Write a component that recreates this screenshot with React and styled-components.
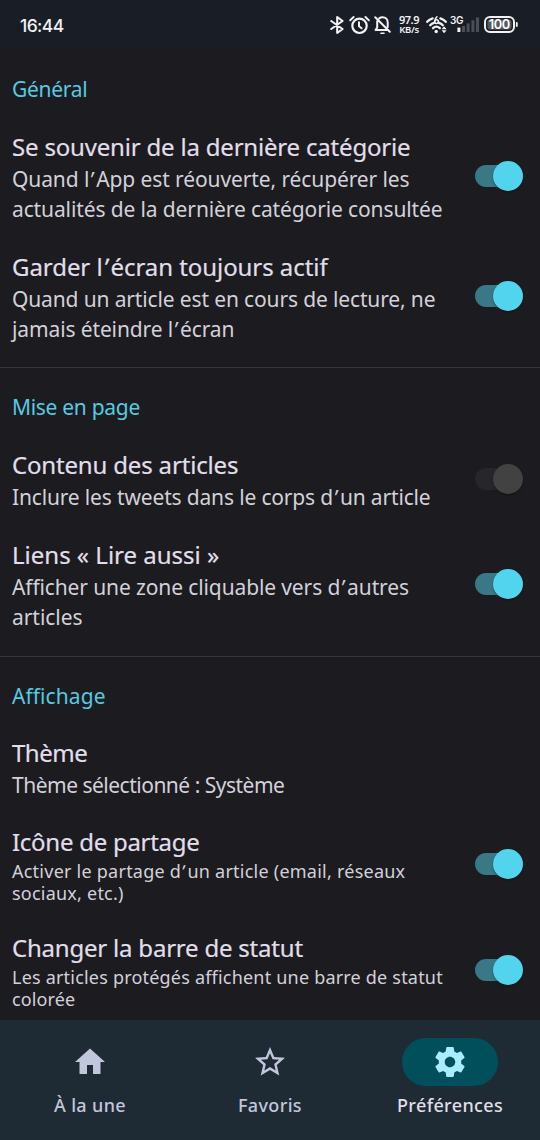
import React from "react";
import styled, { createGlobalStyle } from "styled-components";

const GlobalStyle = createGlobalStyle`
  * { box-sizing: border-box; }
  body { margin: 0; background: #1c1b1f; }
`;

const Screen = styled.div`
  width: 540px;
  height: 1140px;
  display: flex;
  flex-direction: column;
  overflow: hidden;
  background: #1c1b1f;
  color: #e0dfea;
  font-family: "Noto Sans", sans-serif;
`;

const StatusBar = styled.header`
  flex: none;
  height: 50px;
  padding: 0 22px 0 20px;
  display: flex;
  align-items: center;
  justify-content: space-between;
  background: #191d25;
  color: #f2f2f4;
  font-family: Inter, sans-serif;
`;

const Clock = styled.time`
  font-size: 17.5px;
  font-weight: 500;
  line-height: 20px;
  letter-spacing: -0.6px;
  padding-top: 2px;
`;

const StatusIcons = styled.div`
  display: flex;
  align-items: center;
`;

const StatusIcon = styled.svg`
  display: block;
  flex: none;
  width: ${(p) => p.$width}px;
  height: 20px;
  margin-right: ${(p) => p.$gap || 0}px;
  overflow: visible;
  fill: none;
  stroke: #f2f2f4;
  stroke-width: 2;
  stroke-linecap: round;
  stroke-linejoin: round;
`;

const NetSpeed = styled.div`
  width: 22px;
  margin-right: 6px;
  display: flex;
  flex-direction: column;
  align-items: center;
  font-family: "Noto Sans", sans-serif;
  font-weight: 600;
  white-space: nowrap;
`;

const SpeedValue = styled.span`
  font-size: 11px;
  line-height: 10px;
  letter-spacing: -0.5px;
`;

const SpeedUnit = styled.span`
  font-size: 9.5px;
  line-height: 10px;
  letter-spacing: -0.3px;
`;

const Settings = styled.main`
  flex: 1;
  min-height: 0;
  overflow: hidden;
`;

const Section = styled.section`
  padding: 24px 0 ${(p) => p.$tail}px;
  border-bottom: ${(p) => (p.$last ? "none" : "1px solid #38373d")};
`;

const Category = styled.h2`
  margin: 0 0 14px;
  padding-left: 12px;
  font-size: 21px;
  font-weight: 400;
  line-height: 30px;
  letter-spacing: ${(p) => p.$spacing || 0}px;
  color: #54cbe2;
`;

const Row = styled.div`
  display: flex;
  align-items: center;
  justify-content: space-between;
  padding: ${(p) => p.$top || 14}px 17px ${(p) => p.$bottom || 14}px 12px;
`;

const Labels = styled.div`
  display: flex;
  flex-direction: column;
  white-space: nowrap;
`;

const Title = styled.div`
  margin-bottom: ${(p) => (p.$small ? 3 : 2)}px;
  font-size: 24px;
  font-weight: 400;
  line-height: 30px;
  letter-spacing: ${(p) => p.$spacing}px;
  -webkit-text-stroke: 0.2px currentColor;
`;

const SummaryLine = styled.div`
  font-size: ${(p) => (p.$small ? 18 : 21)}px;
  line-height: ${(p) => (p.$small ? 22 : 30)}px;
  letter-spacing: ${(p) => p.$spacing}px;
  color: #d2d1da;
`;

const Apostrophe = styled.span`
  display: inline-block;
  line-height: 1;
  padding: 0 0.1em 0 0.06em;
  transform: skewX(-6deg);
`;

const Track = styled.div`
  flex: none;
  width: 48px;
  height: 30px;
  margin-bottom: 4px;
  display: flex;
  justify-content: flex-end;
  position: relative;

  &::before {
    content: "";
    position: absolute;
    left: 0;
    top: 4px;
    width: 42px;
    height: 22px;
    border-radius: 11px;
    background: ${(p) => (p.$on ? "#397886" : "#27262b")};
  }
`;

const Thumb = styled.div`
  position: relative;
  width: 30px;
  height: 30px;
  border-radius: 50%;
  background: ${(p) => (p.$on ? "#53d4ee" : "#424242")};
  box-shadow: 0 1px 2px rgba(0, 0, 0, 0.4);
`;

const NavBar = styled.nav`
  flex: none;
  height: 120px;
  display: grid;
  grid-template-columns: repeat(3, 1fr);
  background: #1f2b34;
`;

const NavItem = styled.div`
  display: flex;
  flex-direction: column;
  align-items: center;
  padding-top: 18px;
  color: ${(p) => (p.$active ? "#e0dfea" : "#c2c6dc")};
`;

const NavPill = styled.div`
  width: 96px;
  height: 48px;
  border-radius: 24px;
  display: flex;
  align-items: center;
  justify-content: center;
  background: ${(p) => (p.$active ? "#004f5b" : "transparent")};
  color: ${(p) => (p.$active ? "#a8edff" : "#c2c6dc")};

  svg {
    display: block;
    width: 36px;
    height: 36px;
    fill: currentColor;
  }
`;

const NavLabel = styled.span`
  margin-top: 7px;
  font-size: 18px;
  font-weight: 500;
  line-height: 24px;
  letter-spacing: 0.35px;
`;

const sections = [
  {
    name: "Général",
    spacing: -0.3,
    tail: 9,
    rows: [
      {
        title: ["Se souvenir de la dernière catégorie", -0.19],
        lines: [
          ["Quand l’App est réouverte, récupérer les", -0.1],
          ["actualités de la dernière catégorie consultée", -0.12],
        ],
        on: true,
      },
      {
        title: ["Garder l’écran toujours actif", -0.06],
        lines: [
          ["Quand un article est en cours de lecture, ne", -0.14],
          ["jamais éteindre l’écran", -0.12],
        ],
        on: true,
      },
    ],
  },
  {
    name: "Mise en page",
    spacing: -0.3,
    tail: 10,
    rows: [
      {
        title: ["Contenu des articles", -0.17],
        lines: [["Inclure les tweets dans le corps d’un article", -0.16]],
        on: false,
      },
      {
        title: ["Liens « Lire aussi »", 0],
        lines: [
          ["Afficher une zone cliquable vers d’autres", -0.12],
          ["articles", -0.05],
        ],
        on: true,
      },
    ],
  },
  {
    name: "Affichage",
    spacing: 0.08,
    tail: 0,
    rows: [
      {
        title: ["Thème", -0.5],
        lines: [["Thème sélectionné : Système", -0.5]],
        top: 13,
        bottom: 13,
      },
      {
        title: ["Icône de partage", -0.27],
        lines: [
          ["Activer le partage d’un article (email, réseaux", 0.24],
          ["sociaux, etc.)", 0.22],
        ],
        small: true,
        on: true,
        bottom: 15,
      },
      {
        title: ["Changer la barre de statut", -0.21],
        lines: [
          ["Les articles protégés affichent une barre de statut", 0.2],
          ["colorée", 0.1],
        ],
        small: true,
        on: true,
      },
    ],
  },
];

const navItems = [
  { label: "À la une", path: "M10 20v-6h4v6h5v-8h3L12 3 2 12h3v8z" },
  {
    label: "Favoris",
    path: "M22 9.24l-7.19-.62L12 2 9.19 8.63 2 9.24l5.46 4.73L5.82 21 12 17.27 18.18 21l-1.63-7.03L22 9.24zM12 15.4l-3.76 2.27 1-4.28-3.32-2.88 4.38-.38L12 6.1l1.71 4.04 4.38.38-3.32 2.88 1 4.28L12 15.4z",
  },
  {
    label: "Préférences",
    active: true,
    path: "M19.43 12.98c.04-.32.07-.64.07-.98s-.03-.66-.07-.98l2.11-1.65c.19-.15.24-.42.12-.64l-2-3.46c-.12-.22-.39-.3-.61-.22l-2.49 1c-.52-.4-1.08-.73-1.69-.98l-.38-2.65C14.46 2.18 14.25 2 14 2h-4c-.25 0-.46.18-.49.42l-.38 2.65c-.61.25-1.17.59-1.69.98l-2.49-1c-.23-.09-.49 0-.61.22l-2 3.46c-.13.22-.07.49.12.64l2.11 1.65c-.04.32-.07.65-.07.98s.03.66.07.98l-2.11 1.65c-.19.15-.24.42-.12.64l2 3.46c.12.22.39.3.61.22l2.49-1c.52.4 1.08.73 1.69.98l.38 2.65c.03.24.24.42.49.42h4c.25 0 .46-.18.49-.42l.38-2.65c.61-.25 1.17-.59 1.69-.98l2.49 1c.23.09.49 0 .61-.22l2-3.46c.12-.22.07-.49-.12-.64l-2.11-1.65zM12 15.5c-1.93 0-3.5-1.57-3.5-3.5s1.57-3.5 3.5-3.5 3.5 1.57 3.5 3.5-1.57 3.5-3.5 3.5z",
  },
];

function Copy({ text }) {
  return text
    .split(/(’)/)
    .map((part, i) => (part === "’" ? <Apostrophe key={i}>’</Apostrophe> : part));
}

function Switch({ on }) {
  return (
    <Track $on={on} role="switch" aria-checked={on}>
      <Thumb $on={on} />
    </Track>
  );
}

function Preference({ row }) {
  return (
    <Row $top={row.top} $bottom={row.bottom}>
      <Labels>
        <Title $small={row.small} $spacing={row.title[1]}>
          <Copy text={row.title[0]} />
        </Title>
        {row.lines.map(([text, spacing]) => (
          <SummaryLine key={text} $small={row.small} $spacing={spacing}>
            <Copy text={text} />
          </SummaryLine>
        ))}
      </Labels>
      {row.on !== undefined && <Switch on={row.on} />}
    </Row>
  );
}

function Status() {
  return (
    <StatusBar>
      <Clock>16:44</Clock>
      <StatusIcons>
        <StatusIcon $width={14} $gap={5} viewBox="0 0 14 20">
          <path d="M1.2 6 12.6 14 7.2 18V2l5.4 4L1.2 14" strokeWidth="2.1" />
        </StatusIcon>
        <StatusIcon $width={21} $gap={4.5} viewBox="0 0 21 20">
          <circle cx="10.5" cy="10.8" r="7.2" strokeWidth="2.2" />
          <path d="M10 7.3v4l2.6 2M1.2 5.2 4.6 2M19.8 5.2 16.4 2" />
        </StatusIcon>
        <StatusIcon $width={17} $gap={7} viewBox="0 0 17 20">
          <path d="M3.2 6.2v6.3L1.5 15h12M5.2 3.4c1-.8 2-1.1 3.3-1.1 3.2 0 5.2 2.2 5.2 5.2v4.6M1.2 2.2l14.6 14.6" />
          <path d="M7 18.3h3" strokeWidth="1.6" />
        </StatusIcon>
        <NetSpeed>
          <SpeedValue>97.9</SpeedValue>
          <SpeedUnit>KB/s</SpeedUnit>
        </NetSpeed>
        <StatusIcon $width={21} $gap={3} viewBox="0 0 21 20">
          <path d="M1.2 6.8C2.8 5 4.6 4 6.6 3.4M19.8 6.8C18.2 5 16.4 4 14.4 3.4M4.2 10.2c1.2-1.3 2.4-2 3.8-2.4M16.8 10.2c-1.2-1.3-2.4-2-3.8-2.4M7 13.2c2-1.9 4.8-1.9 6.8 0" strokeWidth="2.3" />
          <circle cx="10.2" cy="16.5" r="1.7" fill="#f2f2f4" stroke="none" />
          <circle cx="10.5" cy="6.6" r="1.9" strokeWidth="1.6" />
          <path d="M8.7 6.4c0-2 .8-3.6 2.2-4.6" strokeWidth="1.6" />
          <path d="m15.6 14.2 2.5-3 2.5 3zM15.6 15.2l2.5 3 2.5-3z" fill="#f2f2f4" stroke="none" />
        </StatusIcon>
        <StatusIcon $width={29} $gap={5} viewBox="0 0 29 20">
          <text x="0" y="8.6" fontFamily="Inter, sans-serif" fontSize="10" fontWeight="600" letterSpacing="-0.4" fill="#f2f2f4" stroke="none">
            3G
          </text>
          <g stroke="none">
            <rect x="7.4" y="12.6" width="3" height="4.4" fill="#f2f2f4" />
            <rect x="12" y="11" width="3" height="6" fill="#4a4e56" />
            <rect x="16.6" y="8.4" width="3" height="8.6" fill="#4a4e56" />
            <rect x="21.4" y="5.4" width="3" height="11.6" fill="#4a4e56" />
            <rect x="26" y="2.4" width="3" height="14.6" fill="#4a4e56" />
          </g>
        </StatusIcon>
        <StatusIcon $width={34} viewBox="0 0 34 20">
          <rect x="1" y="2" width="29" height="15" rx="5" />
          <path d="M32.8 8v3" strokeWidth="1.8" />
          <rect x="3.4" y="4.4" width="24.2" height="10.2" rx="3" fill="#555961" stroke="none" />
          <text x="15.3" y="14.1" textAnchor="middle" fontFamily="Inter, sans-serif" fontSize="12.8" fontWeight="600" letterSpacing="-0.4" fill="#ffffff" stroke="none">
            100
          </text>
        </StatusIcon>
      </StatusIcons>
    </StatusBar>
  );
}

export default function App() {
  return (
    <>
      <GlobalStyle />
      <Screen>
        <Status />
        <Settings>
          {sections.map((section, i) => (
            <Section key={section.name} $tail={section.tail} $last={i === sections.length - 1}>
              <Category $spacing={section.spacing}>{section.name}</Category>
              {section.rows.map((row) => (
                <Preference key={row.title[0]} row={row} />
              ))}
            </Section>
          ))}
        </Settings>
        <NavBar>
          {navItems.map((item) => (
            <NavItem key={item.label} $active={item.active}>
              <NavPill $active={item.active}>
                <svg viewBox="0 0 24 24">
                  <path d={item.path} />
                </svg>
              </NavPill>
              <NavLabel>{item.label}</NavLabel>
            </NavItem>
          ))}
        </NavBar>
      </Screen>
    </>
  );
}
